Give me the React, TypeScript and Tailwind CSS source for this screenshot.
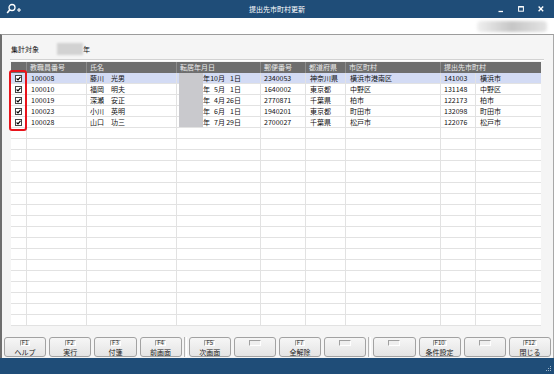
import React from "react";

type Row = {
  no: string;
  name: string;
  m: string;
  d: string;
  zip: string;
  pref: string;
  city: string;
  code: string;
  dest: string;
};

const DATA: Row[] = [
  { no: "100008", name: "藤川　光男", m: "10", d: "1", zip: "2340053", pref: "神奈川県", city: "横浜市港南区", code: "141003", dest: "横浜市" },
  { no: "100010", name: "福岡　明夫", m: "5", d: "1", zip: "1640002", pref: "東京都", city: "中野区", code: "131148", dest: "中野区" },
  { no: "100019", name: "深瀬　安正", m: "4", d: "26", zip: "2770871", pref: "千葉県", city: "柏市", code: "122173", dest: "柏市" },
  { no: "100023", name: "小川　英明", m: "6", d: "1", zip: "1940201", pref: "東京都", city: "町田市", code: "132098", dest: "町田市" },
  { no: "100028", name: "山口　功三", m: "7", d: "29", zip: "2700027", pref: "千葉県", city: "松戸市", code: "122076", dest: "松戸市" },
];

const TOTAL_ROWS = 23;

function CheckBox() {
  return (
    <div className="w-[7px] h-[7px] border border-[#444] bg-white flex items-center justify-center">
      <svg width="5" height="5" viewBox="0 0 5 5">
        <path d="M0.6 2.5 L2 3.9 L4.5 0.9" stroke="#000" strokeWidth="1.1" fill="none" />
      </svg>
    </div>
  );
}

function Cell({ children, className = "" }: { children?: React.ReactNode; className?: string }) {
  return (
    <div className={"h-full border-r border-[#e2e2e2] whitespace-nowrap overflow-hidden flex items-center " + className}>
      {children}
    </div>
  );
}

function TableRow({ r, i }: { r?: Row; i: number }) {
  const sel = i === 0;
  return (
    <div
      className={
        "grid grid-cols-[16px_60px_90px_84px_45px_40px_95px_35px_65px] h-[11px] border-b border-[#e2e2e2] " +
        (sel ? "bg-[#d3dbf4]" : "bg-white")
      }
    >
      <Cell className="justify-center">{r ? <CheckBox /> : null}</Cell>
      <Cell className="pl-[4px]">{r?.no}</Cell>
      <Cell className="pl-[3px] border-[#ababab]">{r?.name}</Cell>
      <Cell className="pl-[26px]">
        {r ? (
          <>
            <span>年</span>
            <span className="w-[8px] text-right">{r.m}</span>
            <span>月</span>
            <span className="w-[9px] text-right">{r.d}</span>
            <span>日</span>
          </>
        ) : null}
      </Cell>
      <Cell className="pl-[3px]">{r?.zip}</Cell>
      <Cell className="pl-[4px]">{r?.pref}</Cell>
      <Cell className="pl-[4px]">{r?.city}</Cell>
      <Cell className="pl-[3px]">{r?.code}</Cell>
      <Cell className="pl-[4px] border-r-0">{r?.dest}</Cell>
    </div>
  );
}

function FKey({ k, label }: { k?: string; label?: string }) {
  return (
    <div className="flex-1 h-[20px] rounded-[3px] border border-[#a2a2a2] bg-gradient-to-b from-[#f6f6f6] to-[#e4e4e4] flex flex-col items-center">
      <div
        className={
          "mt-[2px] h-[6px] border-t border-l border-[#a0a0a0] border-b border-r border-b-[#ffffff] border-r-[#ffffff] bg-[#efefef] flex items-center justify-center text-[6px] leading-[6px] text-[#333] " +
          (k ? "px-[1px] min-w-[9px]" : "w-[12px]")
        }
      >
        {k}
      </div>
      <div className="text-[7px] leading-[10px] text-[#222] mt-[1px]">{label}</div>
    </div>
  );
}

function GroupSep() {
  return (
    <div className="w-[7px] h-[20px] flex justify-center">
      <div className="w-[1px] h-full bg-[#b4b4b4] mr-[1px]" />
      <div className="w-[1px] h-full bg-[#ffffff]" />
    </div>
  );
}

export default function App() {
  const rows: (Row | undefined)[] = Array.from({ length: TOTAL_ROWS }, (_, i) => DATA[i]);
  return (
    <div className="w-[554px] h-[374px] flex flex-col overflow-hidden bg-white text-[7px] text-[#111] font-['Noto_Sans_CJK_JP','Noto_Sans',sans-serif]">
      {/* Title bar */}
      <div className="h-[18px] bg-[#1f4d78] grid grid-cols-[1fr_auto_1fr] items-center text-white">
        <div className="pl-[6px] flex items-center">
          <svg width="16" height="12" viewBox="0 0 16 12">
            <circle cx="6" cy="4.5" r="3" stroke="#fff" strokeWidth="1.3" fill="none" />
            <path d="M3.8 6.8 L1.2 10" stroke="#fff" strokeWidth="1.6" />
            <path d="M11 7 H15 M13 5 V9" stroke="#fff" strokeWidth="1.1" />
          </svg>
        </div>
        <div className="text-[7px] leading-[10px]">提出先市町村更新</div>
        <div className="flex justify-end items-center pr-[10px] gap-[14px]">
          <svg width="6" height="8" viewBox="0 0 6 8">
            <path d="M0.5 6.5 H5" stroke="#fff" strokeWidth="1.3" />
          </svg>
          <svg width="6" height="8" viewBox="0 0 6 8">
            <rect x="0.6" y="1.6" width="4.8" height="4.6" stroke="#fff" strokeWidth="1" fill="none" />
            <path d="M0.6 1.8 H5.4" stroke="#fff" strokeWidth="1.4" />
          </svg>
          <svg width="6" height="8" viewBox="0 0 6 8">
            <path d="M0.6 1.5 L5.2 6.3 M5.2 1.5 L0.6 6.3" stroke="#fff" strokeWidth="1.3" />
          </svg>
        </div>
      </div>

      {/* White band */}
      <div className="h-[16px] bg-white flex justify-end items-center pr-[7px]">
        <div className="w-[70px] h-[11px] rounded-[4px] bg-gradient-to-r from-[#f0f0f0] via-[#c6c6c6] to-[#e4e4e4] blur-[1.5px]" />
      </div>

      {/* Content */}
      <div className="flex-1 flex flex-col border-t border-t-[#9c9c9c] border-l-2 border-l-[#6e6e6e] border-r border-r-[#a8a8a8] bg-[#f5f5f5]">
        <div className="mt-[8px] h-[12px] pl-[9px] flex items-center">
          <span>集計対象</span>
          <div className="ml-[18px] w-[26px] h-[12px] bg-[#d2d2d2] blur-[1px]" />
          <span>年</span>
        </div>
        <div className="mt-[4px] ml-[8px] mr-[9px] h-[1px] bg-[#d2d2d2]" />
        <div className="ml-[8px] mr-[9px] h-[1px] bg-white" />

        {/* Table */}
        <div className="relative mt-[1px] ml-[9px] w-[530px] bg-white">
          <div className="grid grid-cols-[16px_60px_90px_84px_45px_40px_95px_35px_65px] h-[11px] bg-[#6e6e6e] text-[#ececec]">
            <div className="border-r border-[#8c8c8c]" />
            <div className="border-r border-[#8c8c8c] pl-[3px] flex items-center">教職員番号</div>
            <div className="border-r border-[#8c8c8c] pl-[3px] flex items-center">氏名</div>
            <div className="border-r border-[#8c8c8c] pl-[3px] flex items-center">転居年月日</div>
            <div className="border-r border-[#8c8c8c] pl-[3px] flex items-center">郵便番号</div>
            <div className="border-r border-[#8c8c8c] pl-[3px] flex items-center">都道府県</div>
            <div className="border-r border-[#8c8c8c] pl-[3px] flex items-center">市区町村</div>
            <div className="col-span-2 pl-[3px] flex items-center">提出先市町村</div>
          </div>
          {rows.map((r, i) => (
            <TableRow key={i} r={r} i={i} />
          ))}
          {/* redaction overlay in date column */}
          <div className="absolute left-[168px] top-[11px] w-[24px] h-[54px] bg-[#c9c9cd] blur-[0.6px]" />
          {/* red highlight around checkboxes */}
          <div className="absolute left-[-2px] top-[8px] w-[18px] h-[61px] border-2 border-[#e8131b] rounded-[3px]" />
        </div>

        {/* Function keys */}
        <div className="mt-auto mb-[1px] px-[2px] flex items-center">
          <div className="flex-1 flex gap-[3px]">
            <FKey k="F1" label="ヘルプ" />
            <FKey k="F2" label="実行" />
            <FKey k="F3" label="付箋" />
            <FKey k="F4" label="前画面" />
          </div>
          <GroupSep />
          <div className="flex-1 flex gap-[3px]">
            <FKey k="F5" label="次画面" />
            <FKey />
            <FKey k="F7" label="全解除" />
            <FKey />
          </div>
          <GroupSep />
          <div className="flex-1 flex gap-[3px]">
            <FKey />
            <FKey k="F10" label="条件設定" />
            <FKey />
            <FKey k="F12" label="閉じる" />
          </div>
        </div>
      </div>

      {/* Status bar */}
      <div className="h-[16px] bg-[#1f4d78] flex justify-end items-end pr-[2px] pb-[2px]">
        <svg width="7" height="7" viewBox="0 0 7 7">
          <rect x="5" y="1" width="1" height="1" fill="#9fb4c8" />
          <rect x="3" y="3" width="1" height="1" fill="#9fb4c8" />
          <rect x="5" y="3" width="1" height="1" fill="#9fb4c8" />
          <rect x="1" y="5" width="1" height="1" fill="#9fb4c8" />
          <rect x="3" y="5" width="1" height="1" fill="#9fb4c8" />
          <rect x="5" y="5" width="1" height="1" fill="#9fb4c8" />
        </svg>
      </div>
    </div>
  );
}
